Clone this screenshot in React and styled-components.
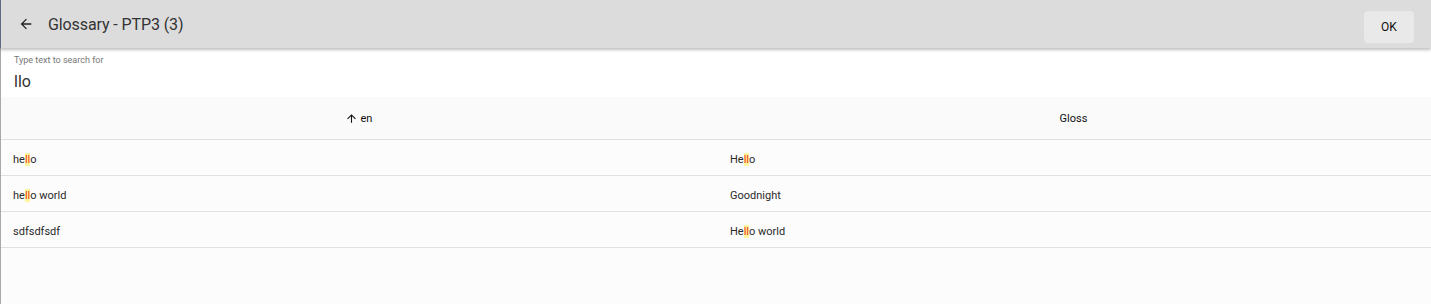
import React from 'react'
import styled, { createGlobalStyle } from 'styled-components'

const GlobalStyle = createGlobalStyle`
  html, body {
    margin: 0;
    padding: 0;
    background: #fcfcfc;
    font-family: Roboto, "Liberation Sans", sans-serif;
  }
`

const Dialog = styled.div`
  display: flex;
  flex-direction: column;
  height: 304px;
  background: #fcfcfc;
  border-left: 1px solid #a9a9a9;
  box-sizing: border-box;
`

const Toolbar = styled.div`
  display: flex;
  align-items: center;
  height: 48px;
  padding: 0 17px 0 17px;
  background: #dcdcdc;
  box-shadow: 0 2px 3px rgba(0, 0, 0, 0.25);
  position: relative;
  z-index: 1;
  margin-left: -1px;
  border-left: 1px solid #5d6a85;
`

const BackButton = styled.span`
  display: flex;
  width: 16px;
  height: 16px;
  margin-right: 14px;
  color: #222;
`

const Title = styled.div`
  flex: 1;
  font-size: 16px;
  color: #333;
  letter-spacing: -0.1px;
`

const OkButton = styled.button`
  font-family: Roboto, "Liberation Sans", sans-serif;
  font-size: 12px;
  color: #111;
  background: #e9e9e9;
  border: 0;
  border-radius: 4px;
  width: 50px;
  height: 32px;
  margin-top: 6px;
  cursor: pointer;
`

const SearchField = styled.div`
  display: flex;
  flex-direction: column;
  background: #fff;
  padding: 7px 13px 0;
  height: 49px;
  box-sizing: border-box;
`

const SearchLabel = styled.label`
  font-size: 9px;
  color: #777;
  line-height: 11px;
`

const SearchValue = styled.div`
  font-size: 16px;
  color: #333;
  margin-top: 6px;
`

const HeaderRow = styled.div`
  display: grid;
  grid-template-columns: 1fr 1fr;
  height: 43px;
  background: #fafafa;
  border-bottom: 1px solid #e0e0e0;
  box-sizing: border-box;
`

const HeaderCell = styled.div`
  display: flex;
  align-items: center;
  justify-content: center;
  font-size: 11px;
  color: #111;
`

const SortIcon = styled.span`
  display: flex;
  margin-right: 3px;
`

const Row = styled.div`
  display: grid;
  grid-template-columns: 1fr 1fr;
  height: 36px;
  border-bottom: 1px solid #e0e0e0;
  box-sizing: border-box;
`

const Cell = styled.div`
  display: flex;
  align-items: center;
  padding: 3px 0 0 ${p => p.$first ? '12px' : '14px'};
  font-size: 11px;
  color: #2a2a2a;
`

const Mark = styled.mark`
  background: #fff59d;
  color: #f23c12;
`

const rows = [
  ['he|ll|o', 'He|ll|o'],
  ['he|ll|o world', 'Goodnight'],
  ['sdfsdfsdf', 'He|ll|o world'],
]

const Highlight = ({text}) => (
  <span>
    {text.split('|').map((part, i) => i % 2 ? <Mark key={i}>{part}</Mark> : <span key={i}>{part}</span>)}
  </span>
)

const App = () => (
  <>
    <GlobalStyle/>
    <Dialog>
      <Toolbar>
        <BackButton>
          <svg width="16" height="16" viewBox="0 0 24 24">
            <path d="M20 11H7.83l5.59-5.59L12 4l-8 8 8 8 1.41-1.41L7.83 13H20v-2z" fill="currentColor"/>
          </svg>
        </BackButton>
        <Title>Glossary - PTP3 (3)</Title>
        <OkButton>OK</OkButton>
      </Toolbar>
      <SearchField>
        <SearchLabel>Type text to search for</SearchLabel>
        <SearchValue>llo</SearchValue>
      </SearchField>
      <HeaderRow>
        <HeaderCell>
          <SortIcon>
            <svg width="13" height="13" viewBox="0 0 24 24">
              <path d="M4 12l1.41 1.41L11 7.83V20h2V7.83l5.58 5.59L20 12l-8-8-8 8z" fill="currentColor"/>
            </svg>
          </SortIcon>
          en
        </HeaderCell>
        <HeaderCell>Gloss</HeaderCell>
      </HeaderRow>
      {rows.map((r, i) => (
        <Row key={i}>
          <Cell $first><Highlight text={r[0]}/></Cell>
          <Cell><Highlight text={r[1]}/></Cell>
        </Row>
      ))}
    </Dialog>
  </>
)

export default App
